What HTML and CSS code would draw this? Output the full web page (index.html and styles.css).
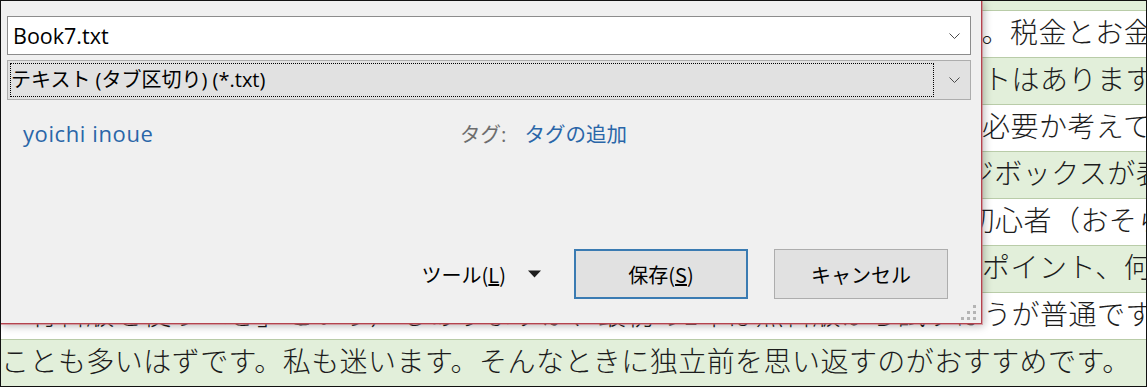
FILE: index.html
```html
<!DOCTYPE html>
<html lang="ja">
<head>
<meta charset="utf-8">
<title>名前を付けて保存</title>
<link rel="stylesheet" href="styles.css">
</head>
<body>
<div class="screen">
  <div class="doc">
    <div class="row top green"></div>
    <div class="row white">フリーランスとして独立して1年目に一番困ったのは確定申告の手続きでした。税金とお金の話は難しいです</div>
    <div class="row green">会計ソフトを使えば作業が3日で終わりますが、それ以外に何か大きなメリットはありますか。</div>
    <div class="row white">毎月1万円の支払いが続くサービスなので、契約する前に本当にそのプランが必要か考えてみましょう。</div>
    <div class="row green">保存ボタンを押すと、ファイル形式の互換性について確認を求めるメッセージボックスが表示されます。</div>
    <div class="row white">このテキスト形式での保存は表計算ソフトの操作にまだあまり慣れていない初心者（おそらく多くの方）にも便利です。</div>
    <div class="row green">タブ区切りのテキストファイルを自分で作るときに、必ず気をつけたい2つのポイント、何度も確認しましょう。</div>
    <div class="row white">「有料版を使うべき」という声もありますが、最初の1年は無料版から試すほうが普通です。</div>
    <div class="row green">ことも多いはずです。私も迷います。そんなときに独立前を思い返すのがおすすめです。</div>
  </div>

  <div class="dialog">
    <div class="field filename">
      <span class="value">Book7.txt</span>
      <svg class="chevron" width="11" height="6" viewBox="0 0 11 6"><polyline points="0.5,0.5 5.5,5.5 10.5,0.5" fill="none" stroke="#4a4a4a" stroke-width="1"/></svg>
    </div>
    <div class="field filetype">
      <span class="focus">テキスト (タブ区切り) (*.txt)</span>
      <svg class="chevron" width="11" height="6" viewBox="0 0 11 6"><polyline points="0.5,0.5 5.5,5.5 10.5,0.5" fill="none" stroke="#4a4a4a" stroke-width="1"/></svg>
    </div>
    <div class="meta">
      <span class="author link">yoichi inoue</span>
      <span class="tag-label">タグ:</span>
      <span class="tag-add link">タグの追加</span>
    </div>
    <div class="footer">
      <div class="tools">
        <span class="tools-label">ツール(<u>L</u>)</span>
        <svg class="caret" width="13" height="8" viewBox="0 0 13 8"><polygon points="0,0.5 13,0.5 6.5,7.5" fill="#1e1e1e"/></svg>
      </div>
      <div class="btn primary">保存(<u>S</u>)</div>
      <div class="btn">キャンセル</div>
    </div>
    <svg class="grip" width="15" height="15" viewBox="0 0 15 15">
      <rect x="12" y="0" width="3" height="3" fill="#b4b4b4"/>
      <rect x="6" y="6" width="3" height="3" fill="#b4b4b4"/>
      <rect x="12" y="6" width="3" height="3" fill="#b4b4b4"/>
      <rect x="0" y="12" width="3" height="3" fill="#b4b4b4"/>
      <rect x="6" y="12" width="3" height="3" fill="#b4b4b4"/>
      <rect x="12" y="12" width="3" height="3" fill="#b4b4b4"/>
    </svg>
  </div>
</div>
</body>
</html>
```

FILE: styles.css
```css
html, body {
  margin: 0;
  padding: 0;
}

body {
  width: 1147px;
  height: 387px;
  overflow: hidden;
  background: #ffffff;
}

.screen {
  position: relative;
  box-sizing: border-box;
  width: 1147px;
  height: 387px;
  border: 1px solid #111111;
  overflow: hidden;
}

/* ---------- document table behind the dialog ---------- */
.doc {
  font-family: "Noto Sans CJK JP", sans-serif;
  font-weight: 300;
  font-size: 28px;
  letter-spacing: 0.45px;
  color: #1c1c1c;
}

.row {
  box-sizing: border-box;
  height: 47px;
  line-height: 40px;
  border-bottom: 1px solid #b9cca8;
  white-space: nowrap;
  overflow: hidden;
}

.row.top {
  height: 10px;
}

.row:last-child {
  height: 46px;
  line-height: 41px;
  border-bottom: 0;
}

.green {
  background: #e2efda;
}

.white {
  background: #ffffff;
}

/* ---------- save dialog ---------- */
.dialog {
  position: absolute;
  left: -1px;
  top: -1px;
  box-sizing: border-box;
  width: 982px;
  height: 324px;
  padding: 15px 10px 24px 6px;
  background: #f0f0f0;
  border: 1px solid #b4434e;
  box-shadow: 1px 1px 0 rgba(205, 110, 120, 0.55), 2px 2px 8px rgba(0, 0, 0, 0.28);
  display: flex;
  flex-direction: column;
  font-family: "Open Sans", "Noto Sans CJK JP", sans-serif;
  font-size: 20px;
  color: #000000;
}

.field {
  box-sizing: border-box;
  height: 39px;
  border: 1px solid #8c8c8c;
  background: #ffffff;
  display: flex;
  align-items: center;
}

.filename .value {
  padding-left: 5px;
  font-size: 21.5px;
}

.chevron {
  margin-left: auto;
  margin-right: 10px;
  flex: none;
}

.filetype {
  margin-top: 5px;
  height: 40px;
  background: #e1e1e1;
  border-color: #adadad;
}

.focus {
  box-sizing: border-box;
  margin-left: 2px;
  width: 924px;
  height: 34px;
  line-height: 32px;
  border: 1px dotted #000000;
  white-space: nowrap;
}

.meta {
  margin-top: 18px;
  height: 30px;
  padding-left: 16px;
  display: flex;
  align-items: center;
  font-size: 20.5px;
}

.link {
  color: #2a66a8;
}

.author {
  width: 437px;
  flex: none;
  font-size: 22px;
  letter-spacing: 0.6px;
}

.tag-label {
  color: #6d6d6d;
}

.tag-add {
  margin-left: 18px;
}

.footer {
  margin-top: auto;
  padding-right: 23px;
  display: flex;
  align-items: center;
  justify-content: flex-end;
  font-family: "Noto Sans CJK JP", sans-serif;
}

.tools {
  display: flex;
  align-items: center;
  margin-right: 33px;
}

.caret {
  margin-left: 22px;
}

.btn {
  box-sizing: border-box;
  width: 174px;
  height: 50px;
  background: #e1e1e1;
  border: 1px solid #adadad;
  display: flex;
  align-items: center;
  justify-content: center;
}

.btn.primary {
  border: 2px solid #3a7bb2;
  margin-right: 26px;
}

.grip {
  position: absolute;
  right: 5px;
  bottom: 3px;
}
```
